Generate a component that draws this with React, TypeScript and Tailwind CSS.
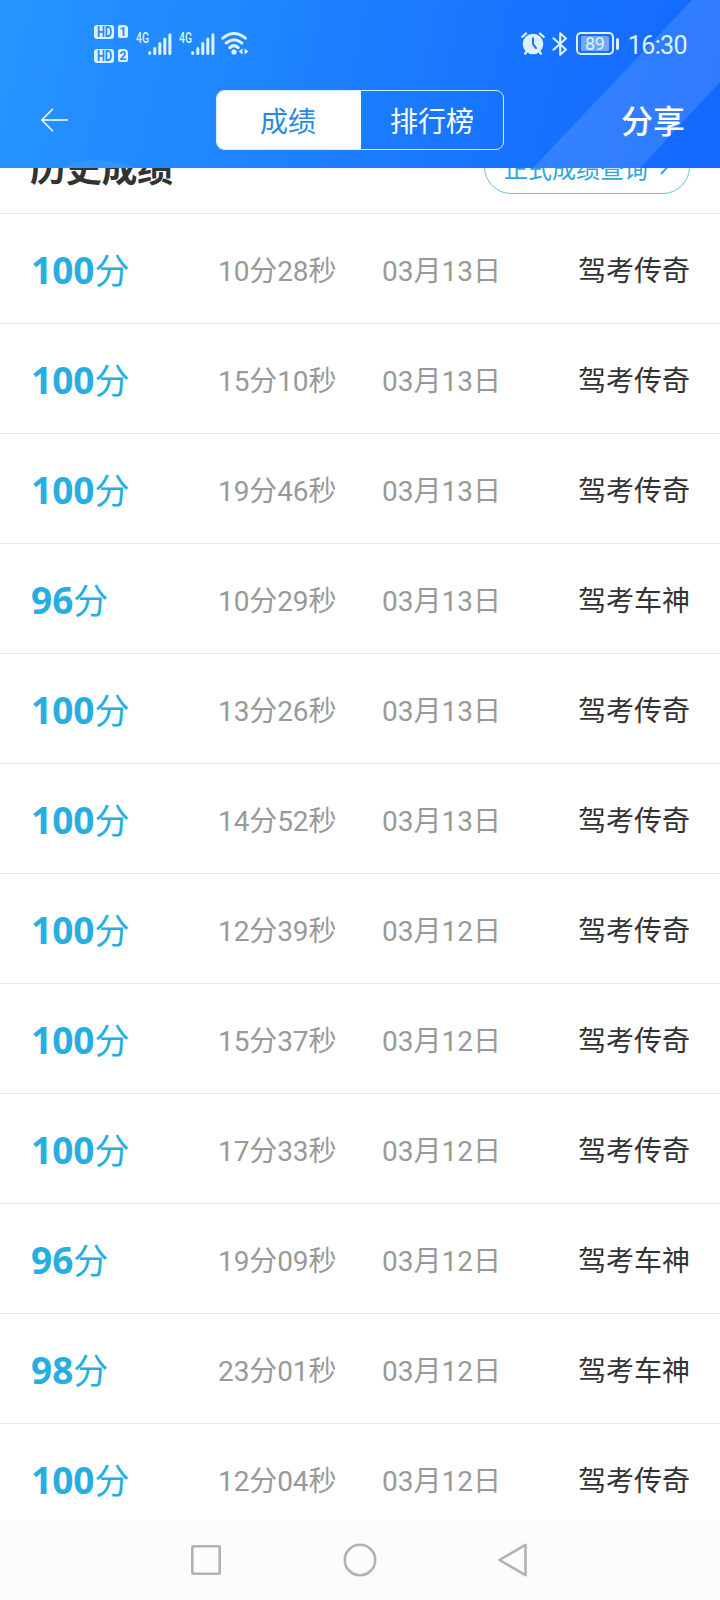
import React from 'react';

interface ScoreRecord {
  score: number;
  duration: string;
  date: string;
  title: string;
}

const records: ScoreRecord[] = [
  { score: 100, duration: '10分28秒', date: '03月13日', title: '驾考传奇' },
  { score: 100, duration: '15分10秒', date: '03月13日', title: '驾考传奇' },
  { score: 100, duration: '19分46秒', date: '03月13日', title: '驾考传奇' },
  { score: 96, duration: '10分29秒', date: '03月13日', title: '驾考车神' },
  { score: 100, duration: '13分26秒', date: '03月13日', title: '驾考传奇' },
  { score: 100, duration: '14分52秒', date: '03月13日', title: '驾考传奇' },
  { score: 100, duration: '12分39秒', date: '03月12日', title: '驾考传奇' },
  { score: 100, duration: '15分37秒', date: '03月12日', title: '驾考传奇' },
  { score: 100, duration: '17分33秒', date: '03月12日', title: '驾考传奇' },
  { score: 96, duration: '19分09秒', date: '03月12日', title: '驾考车神' },
  { score: 98, duration: '23分01秒', date: '03月12日', title: '驾考车神' },
  { score: 100, duration: '12分04秒', date: '03月12日', title: '驾考传奇' },
];

const SimBadge: React.FC<{ slot: number }> = ({ slot }) => (
  <div className="flex h-[14px] items-center gap-1 font-['Roboto',sans-serif] font-bold leading-none text-[#2a86f5]">
    <span className="flex h-[14px] w-5 items-center justify-center rounded-[3px] bg-[#dcf3ff] text-[14px]">
      <span className="scale-x-[0.8]">HD</span>
    </span>
    <span className="flex h-[13px] w-[10px] items-center justify-center rounded-[2px] rounded-tr-[4px] bg-[#dcf3ff] text-[12px]">
      {slot}
    </span>
  </div>
);

const Signal = () => (
  <div className="flex h-[22px] items-start">
    <span className="w-3 origin-left scale-x-[0.74] font-['Roboto',sans-serif] text-[14px] font-medium leading-[10px]">4G</span>
    <svg width="24" height="22" viewBox="0 0 24 22" stroke="currentColor" strokeWidth="3" strokeLinecap="round">
      <path d="M1.7 19.6v.8M6.8 15.5v4.9M11.8 10.5v9.9M16.8 6v14.4M21.9 1.7v18.7" />
    </svg>
  </div>
);

const WifiIcon = () => (
  <svg width="28" height="23" viewBox="0 0 28 23" fill="none" stroke="currentColor" strokeWidth="3" strokeLinecap="round">
    <path d="M1.8 6.2Q13 -3.2 24.4 6.2" />
    <path d="M5.2 11Q13 4.4 20.8 11" />
    <path d="M8.8 15.6Q13 11.6 17.2 15.6" />
    <circle cx="13" cy="20" r="2.6" fill="currentColor" stroke="none" />
    <path d="M21.5 16.4v6l-3.8-3zM23.6 16.4v6l3.8-3z" fill="currentColor" stroke="none" />
  </svg>
);

const AlarmIcon = () => (
  <svg width="24" height="23" viewBox="0 0 24 23" fill="none" stroke="currentColor" strokeLinecap="round">
    <circle cx="12" cy="12" r="10.3" fill="currentColor" stroke="none" />
    <path d="M1.3 4.8 5 1.5M22.7 4.8 19 1.5M4.2 21.5l2-2.5M19.8 21.5l-2-2.5" strokeWidth="2.3" />
    <path d="M12 6.3v5.8l3 4" stroke="#1d79ff" strokeWidth="2.1" />
  </svg>
);

const BluetoothIcon = () => (
  <svg width="16" height="24" viewBox="0 0 16 24" fill="none" stroke="currentColor" strokeWidth="2.1" strokeLinejoin="round" strokeLinecap="round">
    <path d="M1.5 6.3 14 17.5 8.2 22.7V1.3L14 6.5 1.5 17.7" />
  </svg>
);

const Battery = () => (
  <div className="flex items-center gap-[2px]">
    <div className="flex h-[23px] w-[38px] items-center justify-center rounded-[5px] border-2 border-[#dcf3ff]">
      <span className="flex h-[15px] w-[28px] items-center justify-center rounded-[2px] bg-[#6ea9ff] font-['Roboto',sans-serif] text-[18px] leading-none tracking-[-0.5px]">
        89
      </span>
    </div>
    <span className="h-3 w-[3px] rounded-full bg-[#dcf3ff]" />
  </div>
);

const StatusBar = () => (
  <div className="flex h-[84px] items-center justify-between pl-[94px] pr-[33px] pt-[3px] text-[#dcf3ff]">
    <div className="flex items-center">
      <div className="flex flex-col gap-[10px]">
        <SimBadge slot={1} />
        <SimBadge slot={2} />
      </div>
      <div className="ml-2 flex gap-[7px]">
        <Signal />
        <Signal />
      </div>
      <div className="ml-[6px]">
        <WifiIcon />
      </div>
    </div>
    <div className="flex items-center">
      <AlarmIcon />
      <div className="ml-[7px]">
        <BluetoothIcon />
      </div>
      <div className="ml-[8px]">
        <Battery />
      </div>
      <span className="ml-[9px] mt-[3px] font-['Roboto',sans-serif] text-[25px] leading-none tracking-[-0.6px]">16:30</span>
    </div>
  </div>
);

const Header = () => (
  <header className="relative h-[168px] overflow-hidden bg-[linear-gradient(103deg,#2794ff_0%,#1f85ff_35%,#1874ff_68%,#1467ff_100%)] text-white">
    <svg className="absolute inset-0" width="720" height="168" viewBox="0 0 720 168">
      <path d="M692 0H720V82L640 168H533Z" fill="#fff" fillOpacity="0.12" />
      <circle cx="97" cy="250" r="90" fill="#fff" fillOpacity="0.07" />
    </svg>
    <div className="relative">
      <StatusBar />
      <div className="flex h-[72px] items-center pl-10 pr-[35px]">
        <svg width="30" height="26" viewBox="0 0 30 26" fill="none" stroke="currentColor" strokeWidth="1.5">
          <path d="M28 13H2M13 1.8 1.8 13 13 24.2" />
        </svg>
        <div className="ml-[146px] flex h-[60px] w-72 overflow-hidden rounded-lg border border-[#d3edff] text-[28px]">
          <button className="w-36 bg-white pr-[2px] pt-[2px] text-[#2b87e3]">成绩</button>
          <button className="flex-1 pt-[2px]">排行榜</button>
        </div>
        <button className="ml-auto pt-[1px] text-[32px] font-medium leading-none">分享</button>
      </div>
    </div>
  </header>
);

// Scrolled partly under the header, so only its lower part shows
const HistoryTitle = () => (
  <div className="h-[45px] overflow-hidden">
    <div className="-mt-[28px] flex h-[54px] items-center justify-between pl-[30px] pr-[30px]">
      <h2 className="pt-[4px] text-[36px] font-bold leading-none tracking-[-0.3px] text-[#333]">历史成绩</h2>
      <button className="flex h-[54px] w-[206px] items-center rounded-full border border-[#6fc0df] pl-[19px] pt-[3px] text-[24px] text-[#2fa6dc]">
        正式成绩查询
        <svg className="mb-1 ml-3" width="9" height="16" viewBox="0 0 9 16" fill="none" stroke="currentColor" strokeWidth="2">
          <path d="M1 1l6.5 7L1 15" />
        </svg>
      </button>
    </div>
  </div>
);

const ScoreRow: React.FC<{ record: ScoreRecord }> = ({ record }) => (
  <li className="flex h-[110px] shrink-0 items-center border-t border-[#e4e4e4] pl-[31px] pr-[30px] pt-[2px] text-[28px]">
    <div className="w-[187px] pt-[1px] text-[35px] text-[#27aee1]">
      <span className="text-[37px] font-bold">{record.score}</span>分
    </div>
    <span className="w-[164px] pt-[4px] font-['Roboto','Noto_Sans_CJK_SC',sans-serif] tracking-[-0.1px] text-[#999]">
      {record.duration}
    </span>
    <span className="pt-[4px] font-['Roboto','Noto_Sans_CJK_SC',sans-serif] text-[#999]">{record.date}</span>
    <span className="ml-auto pt-[1px] text-[#333]">{record.title}</span>
  </li>
);

const NavBar = () => (
  <nav className="flex h-20 items-center justify-center gap-[119px] bg-[#fcfcfc] text-[#b2b2b2]">
    <svg width="34" height="36" viewBox="0 0 34 36" fill="none" stroke="currentColor" strokeWidth="2.6">
      <rect x="2.3" y="4.3" width="27.4" height="27.4" rx="1" />
    </svg>
    <svg width="34" height="36" viewBox="0 0 34 36" fill="none" stroke="currentColor" strokeWidth="2.6">
      <circle cx="17" cy="18" r="15.2" />
    </svg>
    <svg width="34" height="36" viewBox="0 0 34 36" fill="none" stroke="currentColor" strokeWidth="2.6" strokeLinejoin="round">
      <path d="M29.5 2.8v30.4L3.5 18Z" />
    </svg>
  </nav>
);

export default function App() {
  return (
    <div className="flex h-[1600px] w-[720px] flex-col bg-white font-['Noto_Sans','Noto_Sans_CJK_SC',sans-serif]">
      <Header />
      <HistoryTitle />
      <ul className="flex h-[1307px] flex-col overflow-hidden">
        {records.map((record, index) => (
          <ScoreRow key={index} record={record} />
        ))}
      </ul>
      <NavBar />
    </div>
  );
}
